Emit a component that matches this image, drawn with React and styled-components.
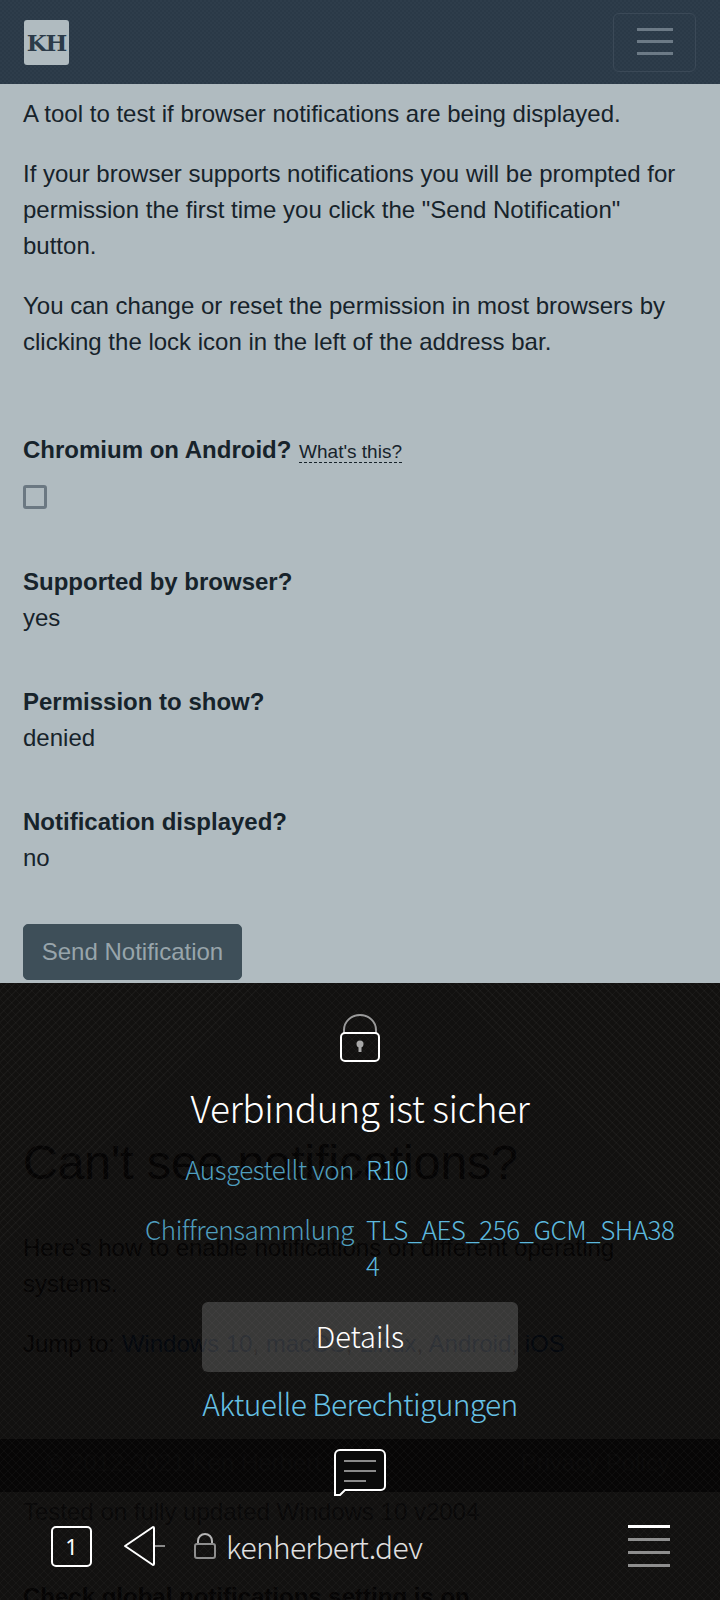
import React from 'react';
import styled, { createGlobalStyle } from 'styled-components';

const GlobalStyle = createGlobalStyle`
  html, body {
    margin: 0;
    padding: 0;
    background: #b0bbc0;
  }
  * {
    box-sizing: border-box;
  }
`;

const App = () => (
  <Screen>
    <GlobalStyle />
    <NavBar>
      <Logo>KH</Logo>
      <Toggler aria-label="menu">
        <svg width="36" height="27" viewBox="0 0 36 27">
          <path d="M0 1.5h36M0 13.5h36M0 25.5h36" stroke="#6c7a86" strokeWidth="3" />
        </svg>
      </Toggler>
    </NavBar>

    <Content>
      <Para>A tool to test if browser notifications are being displayed.</Para>
      <Para>
        If your browser supports notifications you will be prompted for permission the first time
        you click the "Send Notification" button.
      </Para>
      <Para>
        You can change or reset the permission in most browsers by clicking the lock icon in the
        left of the address bar.
      </Para>

      <Status $first>
        <Label>Chromium on Android?</Label> <Hint>What's this?</Hint>
        <CheckBox />
      </Status>
      <Status>
        <Label>Supported by browser?</Label>
        <Value>yes</Value>
      </Status>
      <Status>
        <Label>Permission to show?</Label>
        <Value>denied</Value>
      </Status>
      <Status>
        <Label>Notification displayed?</Label>
        <Value>no</Value>
      </Status>

      <SendButton>Send Notification</SendButton>

      <Heading>Can't see notifications?</Heading>
      <Para>Here's how to enable notifications on different operating systems.</Para>
      <Para>
        Jump to: <DocLink>Windows 10</DocLink>, <DocLink>macOS</DocLink>, <DocLink>Linux</DocLink>,{' '}
        <DocLink>Android</DocLink>, <DocLink>iOS</DocLink>
      </Para>
      <Tested>Tested on fully updated Windows 10 v2004</Tested>
      <SubHeading>Check global notifications setting is on</SubHeading>
    </Content>

    <FooterBand>
      <span>© 2012-2021 Ken Herbert</span>
      <span>Privacy Policy</span>
    </FooterBand>

    <Sheet>
      <BigLock width="40" height="48" viewBox="0 0 40 48" fill="none">
        <path d="M4 20v-4a16 15 0 0 1 32 0v4" stroke="#9a9a9a" strokeWidth="2" />
        <rect x="1" y="19" width="38" height="28" rx="4" stroke="#fff" strokeWidth="2" />
        <circle cx="20" cy="30" r="3.5" fill="#a8a8a8" />
        <path d="M20 31v7" stroke="#a8a8a8" strokeWidth="3" />
      </BigLock>
      <Title>Verbindung ist sicher</Title>
      <InfoGrid>
        <InfoLabel>Ausgestellt von</InfoLabel>
        <InfoValue>R10</InfoValue>
        <InfoLabel>Chiffrensammlung</InfoLabel>
        <InfoValue>TLS_AES_256_GCM_SHA384</InfoValue>
      </InfoGrid>
      <DetailsButton>Details</DetailsButton>
      <PermLink>Aktuelle Berechtigungen</PermLink>
      <ChatIcon width="52" height="47" viewBox="0 0 52 47" fill="none">
        <path
          d="M1 40V6a5 5 0 0 1 5-5h40a5 5 0 0 1 5 5v31a4 4 0 0 1-4 4H11l-5 5H1z"
          stroke="#fff"
          strokeWidth="2"
          fill="#0a0a0a"
        />
        <path d="M10 12h32M10 22h32M10 32h22" stroke="#8a8a8a" strokeWidth="2" />
      </ChatIcon>
      <BottomBar>
        <TabCount>1</TabCount>
        <svg width="44" height="42" viewBox="0 0 44 42" fill="none">
          <path d="M30 2 2 21l28 19a1 1 0 0 0 1-1V3a1 1 0 0 0-1-1z" stroke="#fff" strokeWidth="2" strokeLinejoin="round" />
          <path d="M32 21h10" stroke="#8a8a8a" strokeWidth="2" />
        </svg>
        <UrlBox>
          <svg width="22" height="26" viewBox="0 0 22 26" fill="none">
            <path d="M4 11V8a7 7 0 0 1 14 0v3" stroke="#b5b5b5" strokeWidth="2" />
            <rect x="1" y="11" width="20" height="14" rx="2" stroke="#8e8e8e" strokeWidth="2" />
          </svg>
          <Url>kenherbert.dev</Url>
        </UrlBox>
        <Burger>
          <BurgerLine $active />
          <BurgerLine />
          <BurgerLine />
          <BurgerLine />
        </Burger>
      </BottomBar>
    </Sheet>
  </Screen>
);

export default App;

const Screen = styled.div`
  position: relative;
  width: 720px;
  height: 1600px;
  overflow: hidden;
  background: #b0bbc0;
  color: #17232b;
  font-family: 'Liberation Sans', Arial, sans-serif;
  font-size: 24px;
  line-height: 36px;
`;

const NavBar = styled.div`
  height: 84px;
  padding: 13px 24px 13px 24px;
  display: flex;
  align-items: center;
  justify-content: space-between;
  background-color: #2c3b49;
  background-image: repeating-conic-gradient(#2a3947 0 25%, #2e3d4b 0 50%);
  background-size: 4px 4px;
`;

const Logo = styled.div`
  width: 45px;
  height: 45px;
  margin-top: 1px;
  border-radius: 3px;
  background: #b0bbc0;
  color: #2c3b49;
  font-family: 'DejaVu Serif', serif;
  font-weight: 700;
  font-size: 23px;
  line-height: 45px;
  text-align: center;
  letter-spacing: -1px;
`;

const Toggler = styled.button`
  width: 83px;
  height: 59px;
  border: 1px solid #3b4957;
  border-radius: 6px;
  background: transparent;
  display: flex;
  align-items: center;
  justify-content: center;
  padding: 0 0 2px;
`;

const Content = styled.main`
  padding: 12px 23px 0;
`;

const Para = styled.p`
  margin: 0 0 24px;
`;

const Status = styled.div`
  margin-top: ${props => (props.$first ? '72px' : '0')};
  margin-bottom: 48px;
  padding-bottom: ${props => (props.$first ? '7px' : '0')};
`;

const Label = styled.strong`
  font-weight: 700;
`;

const Hint = styled.span`
  font-size: 19px;
  border-bottom: 1px dashed #17232b;
  line-height: 22px;
  margin-left: 1px;
`;

const Value = styled.div``;

const CheckBox = styled.div`
  width: 24px;
  height: 24px;
  margin-top: 17px;
  border: 3px solid #6b7882;
  border-radius: 3px;
`;

const SendButton = styled.button`
  display: block;
  width: 219px;
  height: 56px;
  padding: 0;
  border: 1px solid #3e4f59;
  border-radius: 5px;
  background: #3e4f59;
  color: #98a5ab;
  font: inherit;
`;

const Heading = styled.h1`
  margin: 154px 0 38px;
  font-size: 48px;
  font-weight: 400;
  line-height: 58px;
`;

const DocLink = styled.a`
  color: #0a4a9c;
`;

const Tested = styled.p`
  margin: 132px 0 49px;
  color: #45525c;
`;

const SubHeading = styled.h3`
  margin: 0;
  font-size: 24px;
  line-height: 36px;
  font-weight: 700;
`;

const FooterBand = styled.footer`
  position: absolute;
  left: 0;
  right: 0;
  top: 1439px;
  height: 53px;
  padding: 0 50px 6px 46px;
  display: flex;
  align-items: center;
  justify-content: space-between;
  background: #2c3b49;
  color: #4c5a64;
  font-size: 24px;
`;

const Sheet = styled.section`
  position: absolute;
  left: 0;
  right: 0;
  top: 983px;
  bottom: 0;
  padding-top: 31px;
  display: flex;
  flex-direction: column;
  align-items: center;
  background-color: rgba(4, 2, 1, 0.92);
  background-image:
    repeating-linear-gradient(45deg, rgba(255, 255, 255, 0.03) 0 1px, transparent 1px 5.66px),
    repeating-linear-gradient(-45deg, rgba(255, 255, 255, 0.03) 0 1px, transparent 1px 5.66px);
  font-family: 'Noto Sans CJK JP', 'Noto Sans', sans-serif;
  font-weight: 300;
  color: #fff;
`;

const BigLock = styled.svg`
  display: block;
  flex: none;
`;

const Title = styled.h2`
  margin: 15px 0 0;
  font-size: 37px;
  line-height: 60px;
  font-weight: 300;
  letter-spacing: -0.4px;
`;

const InfoGrid = styled.div`
  align-self: stretch;
  margin-top: 14px;
  display: grid;
  grid-template-columns: 354px 312px;
  column-gap: 12px;
  row-gap: 24px;
  font-size: 26px;
  line-height: 36px;
  letter-spacing: -0.5px;
`;

const InfoLabel = styled.div`
  text-align: right;
  color: #4f9dbd;
`;

const InfoValue = styled.div`
  color: #5cb8de;
  word-break: break-all;
`;

const DetailsButton = styled.button`
  width: 316px;
  height: 70px;
  margin-top: 19px;
  padding: 0 0 4px;
  flex: none;
  border: 0;
  border-radius: 6px;
  background: rgba(255, 255, 255, 0.17);
  color: #fff;
  font: inherit;
  font-size: 29px;
`;

const PermLink = styled.a`
  margin-top: 7px;
  font-size: 30px;
  line-height: 48px;
  letter-spacing: -0.65px;
  color: #66c0e4;
`;

const ChatIcon = styled.svg`
  display: block;
  flex: none;
  margin-top: 22px;
`;

const BottomBar = styled.nav`
  align-self: stretch;
  margin-top: 29px;
  padding: 0 50px 0 51px;
  display: flex;
  align-items: center;
`;

const TabCount = styled.div`
  width: 41px;
  height: 41px;
  margin-right: 31px;
  border: 2px solid #fff;
  border-radius: 5px;
  font-family: 'Noto Sans', sans-serif;
  font-weight: 400;
  font-size: 22px;
  line-height: 36px;
  text-align: center;
`;

const UrlBox = styled.div`
  flex: 1;
  margin-left: 27px;
  display: flex;
  align-items: center;
  gap: 10px;
`;

const Url = styled.span`
  font-size: 30px;
  line-height: 42px;
  letter-spacing: -0.7px;
  color: #e0e0e0;
`;

const Burger = styled.div`
  width: 42px;
  height: 42px;
  display: flex;
  flex-direction: column;
  justify-content: space-between;
`;

const BurgerLine = styled.i`
  display: block;
  height: 3px;
  background: ${props => (props.$active ? '#fff' : '#8e8e8e')};
`;
